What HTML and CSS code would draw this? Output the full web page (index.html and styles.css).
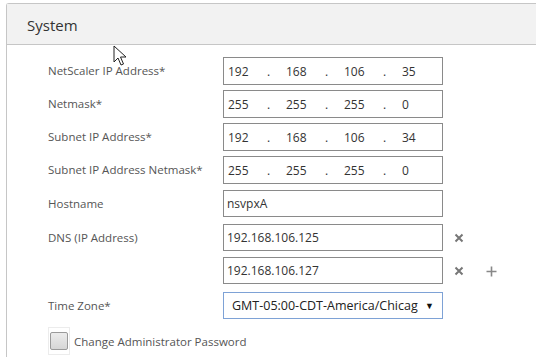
FILE: index.html
```html
<!DOCTYPE html>
<html lang="en">
<head>
    <meta charset="UTF-8">
    <meta name="viewport" content="width=device-width, initial-scale=1.0">
    <title>System</title>
    <link rel="stylesheet" href="styles.css">
</head>
<body>
    <div class="panel">
        <div class="panelHead">System</div>
        <div class="panelBody">
            <div class="row">
                <label class="label">NetScaler IP Address*</label>
                <div class="ipBox">
                    <span class="octet">192</span><span class="dot">.</span>
                    <span class="octet">168</span><span class="dot">.</span>
                    <span class="octet">106</span><span class="dot">.</span>
                    <span class="octet">35</span>
                </div>
            </div>
            <div class="row">
                <label class="label">Netmask*</label>
                <div class="ipBox">
                    <span class="octet">255</span><span class="dot">.</span>
                    <span class="octet">255</span><span class="dot">.</span>
                    <span class="octet">255</span><span class="dot">.</span>
                    <span class="octet">0</span>
                </div>
            </div>
            <div class="row">
                <label class="label">Subnet IP Address*</label>
                <div class="ipBox">
                    <span class="octet">192</span><span class="dot">.</span>
                    <span class="octet">168</span><span class="dot">.</span>
                    <span class="octet">106</span><span class="dot">.</span>
                    <span class="octet">34</span>
                </div>
            </div>
            <div class="row row-tall">
                <label class="label">Subnet IP Address Netmask*</label>
                <div class="ipBox">
                    <span class="octet">255</span><span class="dot">.</span>
                    <span class="octet">255</span><span class="dot">.</span>
                    <span class="octet">255</span><span class="dot">.</span>
                    <span class="octet">0</span>
                </div>
            </div>
            <div class="row row-tall">
                <label class="label">Hostname</label>
                <div class="textBox">nsvpxA</div>
            </div>
            <div class="row">
                <label class="label">DNS (IP Address)</label>
                <div class="textBox">192.168.106.125</div>
                <span class="icon">
                    <svg width="10" height="10" viewBox="0 0 10 10"><path d="M1.5 1.5 L8.5 8.5 M8.5 1.5 L1.5 8.5" stroke="#777" stroke-width="2"/></svg>
                </span>
            </div>
            <div class="row row-gap">
                <label class="label"></label>
                <div class="textBox">192.168.106.127</div>
                <span class="icon">
                    <svg width="10" height="10" viewBox="0 0 10 10"><path d="M1.5 1.5 L8.5 8.5 M8.5 1.5 L1.5 8.5" stroke="#777" stroke-width="2"/></svg>
                </span>
                <span class="icon">
                    <svg width="11" height="11" viewBox="0 0 11 11"><path d="M5.5 0.5 V10.5 M0.5 5.5 H10.5" stroke="#888" stroke-width="1.6"/></svg>
                </span>
            </div>
            <div class="row row-gap">
                <label class="label">Time Zone*</label>
                <div class="selectBox">
                    <span>GMT-05:00-CDT-America/Chicag</span>
                    <span class="arrow">&#9660;</span>
                </div>
            </div>
            <div class="checkRow">
                <span class="checkOuter"><span class="check"></span></span>
                <span class="checkText">Change Administrator Password</span>
            </div>
        </div>
    </div>

    <svg class="cursor" width="14" height="22" viewBox="0 0 14 22">
        <path d="M1 1 L1 17 L5 13 L8 20 L10.5 19 L7.5 12 L13 12 Z" fill="#fff" stroke="#222" stroke-width="1"/>
    </svg>
</body>
</html>
```

FILE: styles.css
```css
*{
    padding: 0;
    margin: 0;
    box-sizing: border-box;
}
body{
    background: #fff;
    font-family: "Open Sans", "Noto Sans", sans-serif;
    overflow: hidden;
    position: relative;
    height: 357px;
}
.panel{
    margin: 3px 0 0 6px;
    width: 530px;
    height: 354px;
    border: 1px solid #c6c6c6;
    border-right: none;
    border-bottom: none;
    border-radius: 3px 0 0 0;
}
.panelHead{
    height: 41px;
    background-color: #f2f2f2;
    border-bottom: 1px solid #c6c6c6;
    padding: 12px 0 0 20px;
    font-size: 15px;
    color: #333;
    line-height: 18px;
}
.panelBody{
    padding: 12px 0 0 41px;
}
.row{
    display: flex;
    align-items: flex-start;
    height: 33px;
}
.row-tall{
    height: 34px;
}
.row-gap{
    height: 35px;
}
.label{
    width: 175px;
    font-size: 11.5px;
    color: #555;
    padding-top: 6px;
}
.ipBox, .textBox, .selectBox{
    width: 220px;
    height: 28px;
    border: 1px solid #8a8a8a;
    font-size: 12px;
    color: #333;
    display: flex;
    align-items: center;
    padding-left: 4px;
}
.textBox{
    height: 27px;
    padding-left: 3px;
}
.octet{
    width: 39px;
}
.dot{
    width: 19px;
}
.icon{
    display: flex;
    align-items: center;
    height: 28px;
    margin-left: 11px;
    margin-right: 22px;
}
.icon + .icon{
    margin-left: 0;
}
.selectBox{
    height: 27px;
    border-color: #7ea2d6;
    font-size: 12.5px;
    color: #222;
    padding-left: 8px;
    justify-content: space-between;
    padding-right: 8px;
}
.arrow{
    font-size: 9px;
    color: #111;
}
.checkRow{
    display: flex;
    align-items: center;
}
.checkOuter{
    width: 22px;
    height: 28px;
    border: 1px solid #ececec;
    display: flex;
    align-items: center;
    justify-content: center;
}
.check{
    width: 18px;
    height: 18px;
    border: 1px solid #9a9a9a;
    border-radius: 2px;
    background: linear-gradient(#ececec, #d6d6d6);
}
.checkText{
    font-size: 11.5px;
    color: #555;
    margin-left: 4px;
}
.cursor{
    position: absolute;
    left: 113px;
    top: 45px;
}
```
